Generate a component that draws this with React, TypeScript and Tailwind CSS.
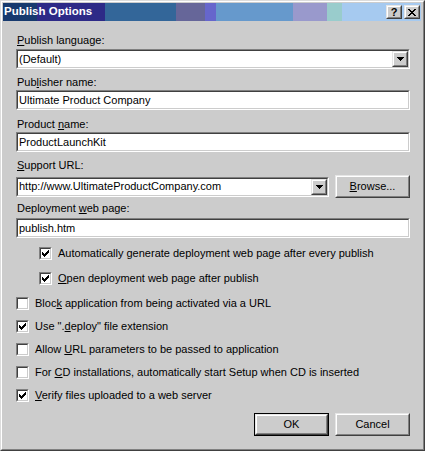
import React from "react";

const FONT = { fontFamily: '"Liberation Sans", Arial, sans-serif' };

function Sunken({ className = "", children }: { className?: string; children?: React.ReactNode }) {
  return (
    <div className={`border border-t-[#808080] border-l-[#808080] border-b-white border-r-white ${className}`}>
      <div className="h-full border border-t-[#404040] border-l-[#404040] border-b-[#cccccc] border-r-[#cccccc] bg-white flex items-center">
        {children}
      </div>
    </div>
  );
}

function Raised({ className = "", children }: { className?: string; children?: React.ReactNode }) {
  return (
    <div className={`border border-t-[#e6e6e6] border-l-[#e6e6e6] border-b-[#404040] border-r-[#404040] bg-[#cccccc] ${className}`}>
      <div className="h-full border border-t-white border-l-white border-b-[#808080] border-r-[#808080] flex items-center justify-center">
        {children}
      </div>
    </div>
  );
}

function Arrow() {
  return (
    <svg width="7" height="4" viewBox="0 0 7 4" shapeRendering="crispEdges">
      <path d="M0 0h7v1H0zM1 1h5v1H1zM2 2h3v1H2zM3 3h1v1H3z" fill="#000" />
    </svg>
  );
}

function CloseGlyph() {
  return (
    <svg width="8" height="7" viewBox="0 0 8 7" shapeRendering="crispEdges">
      <path
        d="M0 0h2v1H0zM6 0h2v1H6zM1 1h2v1H1zM5 1h2v1H5zM2 2h4v1H2zM3 3h2v1H3zM2 4h4v1H2zM1 5h2v1H1zM5 5h2v1H5zM0 6h2v1H0zM6 6h2v1H6z"
        fill="#000"
      />
    </svg>
  );
}

function Combo({ value, className = "" }: { value: string; className?: string }) {
  return (
    <Sunken className={`h-[20px] ${className}`}>
      <span className="flex-1 pl-px text-[11px] leading-none text-black whitespace-nowrap overflow-hidden">{value}</span>
      <Raised className="w-[16px] h-[16px]">
        <Arrow />
      </Raised>
    </Sunken>
  );
}

function TextBox({ value }: { value: string }) {
  return (
    <Sunken className="h-[20px]">
      <span className="pl-px text-[11px] leading-none text-black whitespace-nowrap">{value}</span>
    </Sunken>
  );
}

function Check() {
  return (
    <svg width="7" height="7" viewBox="0 0 7 7" shapeRendering="crispEdges">
      <path
        d="M6 0h1v1H6zM5 1h2v1H5zM0 2h1v1H0zM4 2h3v1H4zM0 3h2v1H0zM3 3h3v1H3zM0 4h5v1H0zM1 5h3v1H1zM2 6h1v1H2z"
        fill="#000"
      />
    </svg>
  );
}

function CheckBox({ checked, children, className = "" }: { checked?: boolean; children: React.ReactNode; className?: string }) {
  return (
    <div className={`flex items-center h-[13px] gap-[6px] ${className}`}>
      <div className="w-[13px] h-[13px] shrink-0 border border-t-[#808080] border-l-[#808080] border-b-white border-r-white">
        <div className="h-full border border-t-[#404040] border-l-[#404040] border-b-[#cccccc] border-r-[#cccccc] bg-white flex items-center justify-center">
          {checked ? <Check /> : null}
        </div>
      </div>
      <span className="text-[11px] leading-[13px] text-black whitespace-nowrap">{children}</span>
    </div>
  );
}

function Label({ children, className = "" }: { children: React.ReactNode; className?: string }) {
  return <div className={`h-[13px] pl-px text-[11px] leading-[13px] text-black whitespace-nowrap ${className}`}>{children}</div>;
}

function Button({ children, isDefault }: { children: React.ReactNode; isDefault?: boolean }) {
  const inner = (
    <Raised className="h-full w-full">
      <span className="text-[11px] leading-none text-black">{children}</span>
    </Raised>
  );
  return isDefault ? (
    <div className="w-[75px] h-[23px] border border-black">{inner}</div>
  ) : (
    <div className="w-[75px] h-[23px]">{inner}</div>
  );
}

const segments: [number, string][] = [
  [34, "#173a6e"],
  [68, "#2d2a87"],
  [71, "#336699"],
  [29, "#666699"],
  [11, "#6666cc"],
  [77, "#6699cc"],
  [34, "#9999cc"],
  [15, "#99cccc"],
  [79, "#a6caf0"],
];

function TitleButton({ children }: { children: React.ReactNode }) {
  return (
    <Raised className="w-[16px] h-[14px]">
      <span className="text-[11px] font-bold leading-none text-black flex items-center">{children}</span>
    </Raised>
  );
}

export default function App() {
  return (
    <div className="w-[425px] h-[451px] bg-[#cccccc]" style={FONT}>
      <div className="h-full border border-t-[#dcdcdc] border-l-[#dcdcdc] border-b-[#404040] border-r-[#404040]">
        <div className="h-full border border-t-white border-l-white border-b-[#808080] border-r-[#808080] p-px flex flex-col">
          {/* Title bar */}
          <div className="relative h-[18px] shrink-0">
            <div className="absolute inset-0 flex">
              {segments.map(([w, c], i) => (
                <div key={i} className="h-full" style={{ width: w, background: c }} />
              ))}
            </div>
            <div className="relative h-full flex items-center pl-[1px] pr-[2px]">
              <span className="text-[11.5px] font-bold text-white leading-none flex-1">Publish Options</span>
              <div className="flex gap-[2px]">
                <TitleButton>?</TitleButton>
                <TitleButton>
                  <CloseGlyph />
                </TitleButton>
              </div>
            </div>
          </div>

          {/* Body */}
          <div className="flex flex-col pl-[13px] pr-[12px]">
            <Label className="mt-[13px]">
              <u>P</u>ublish language:
            </Label>
            <Combo value="(Default)" className="mt-[2px]" />

            <Label className="mt-[7px]">
              Pub<u>l</u>isher name:
            </Label>
            <div className="mt-[1px]">
              <TextBox value="Ultimate Product Company" />
            </div>

            <Label className="mt-[8px]">
              Product <u>n</u>ame:
            </Label>
            <div className="mt-[1px]">
              <TextBox value="ProductLaunchKit" />
            </div>

            <Label className="mt-[7px]">
              <u>S</u>upport URL:
            </Label>
            <div className="mt-[3px] flex items-center gap-[6px]">
              <Combo value="http://www.UltimateProductCompany.com" className="flex-1" />
              <Button>
                <u>B</u>rowse...
              </Button>
            </div>

            <Label className="mt-[4px]">
              Deployment <u>w</u>eb page:
            </Label>
            <div className="mt-[3px]">
              <TextBox value="publish.htm" />
            </div>

            <div className="pl-[23px] flex flex-col">
              <CheckBox checked className="mt-[9px]">
                Automatically <u>g</u>enerate deployment web page after every publish
              </CheckBox>
              <CheckBox checked className="mt-[12px]">
                <u>O</u>pen deployment web page after publish
              </CheckBox>
            </div>

            <CheckBox className="mt-[12px]">
              Bloc<u>k</u> application from being activated via a URL
            </CheckBox>
            <CheckBox checked className="mt-[10px]">
              Use ".<u>d</u>eploy" file extension
            </CheckBox>
            <CheckBox className="mt-[10px]">
              Allow <u>U</u>RL parameters to be passed to application
            </CheckBox>
            <CheckBox className="mt-[10px]">
              For <u>C</u>D installations, automatically start Setup when CD is inserted
            </CheckBox>
            <CheckBox checked className="mt-[10px]">
              <u>V</u>erify files uploaded to a web server
            </CheckBox>

            <div className="mt-[11px] flex justify-end gap-[6px]">
              <Button isDefault>OK</Button>
              <Button>Cancel</Button>
            </div>
          </div>
        </div>
      </div>
    </div>
  );
}
